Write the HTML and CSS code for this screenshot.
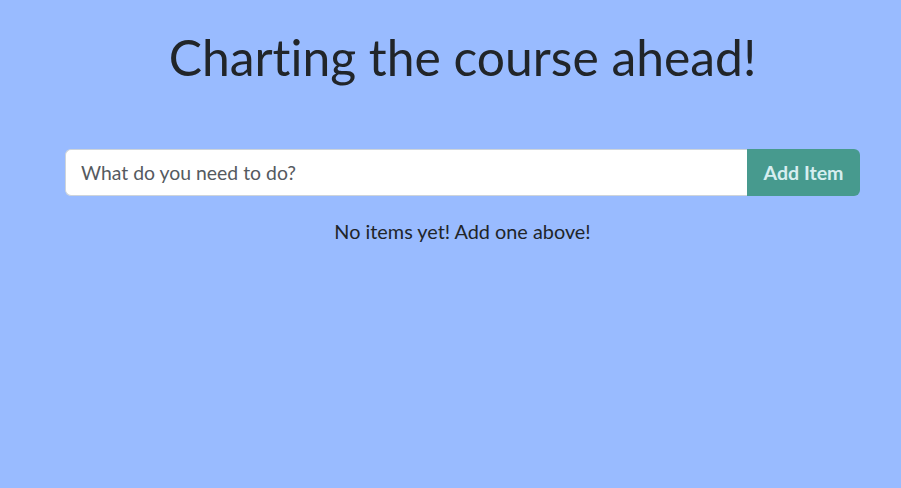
FILE: index.html
```html
<!DOCTYPE html>
<html>
<head>
<meta charset="utf-8">
<link rel="stylesheet" href="styles.css">
</head>
<body>
<div class="app">
  <h1 class="title">Charting the course ahead!</h1>
  <form class="entry">
    <input class="entry-input" type="text" placeholder="What do you need to do?">
    <button class="entry-btn" type="button">Add Item</button>
  </form>
  <p class="empty">No items yet! Add one above!</p>
</div>
</body>
</html>
```
FILE: styles.css
```css
html, body {
  margin: 0;
  padding: 0;
  background: #99bbff;
  height: 100%;
}
body {
  font-family: Lato, "Noto Sans", sans-serif;
  color: #212529;
  font-variant-ligatures: none;
}
.app {
  width: 795px;
  margin: 0 0 0 65px;
  padding-top: 28px;
  display: flex;
  flex-direction: column;
  align-items: stretch;
}
.title {
  margin: 0;
  text-align: center;
  font-weight: 400;
  font-size: 49.8px;
  line-height: 1.2;
}
.entry {
  margin-top: 61px;
  display: flex;
  height: 47px;
}
.entry-input {
  flex: 1;
  border: 1px solid #ced4da;
  border-right: none;
  border-radius: 6px 0 0 6px;
  background: #fff;
  padding: 0 15px;
  font-family: Lato, sans-serif;
  font-size: 19.4px;
  color: #495057;
  outline: none;
  font-variant-ligatures: none;
}
.entry-input::placeholder {
  color: #555a60;
  opacity: 1;
}
.entry-btn {
  width: 113px;
  border: none;
  border-radius: 0 6px 6px 0;
  background: #479a8e;
  color: #d7eef0;
  font-family: Lato, sans-serif;
  font-size: 19.6px;
  font-weight: 700;
  padding: 0;
}
.empty {
  margin: 23px 0 0;
  text-align: center;
  font-size: 19.85px;
}
```
